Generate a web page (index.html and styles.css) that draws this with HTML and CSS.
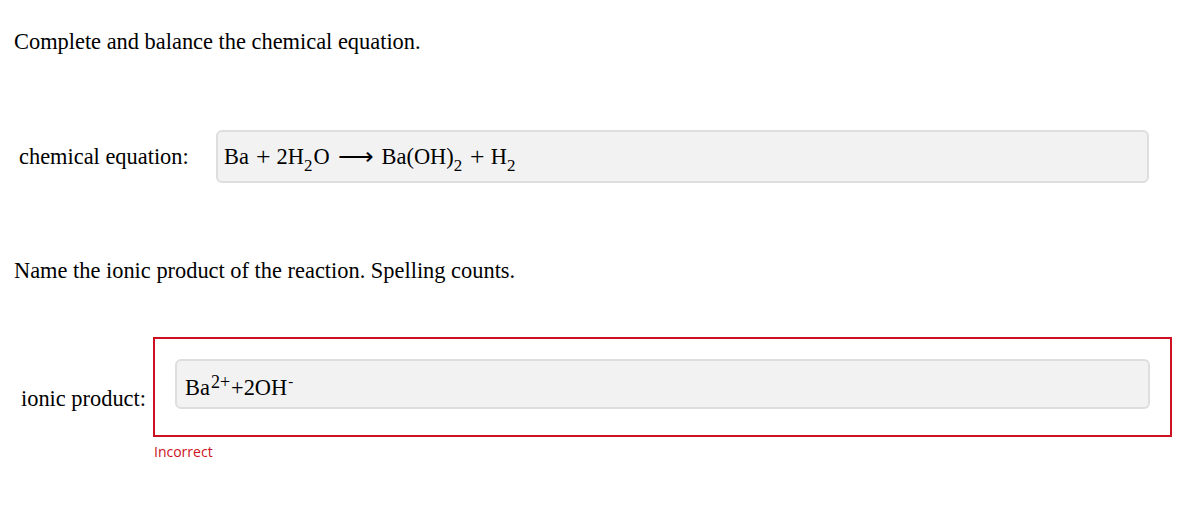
FILE: index.html
```html
<!DOCTYPE html>
<html>
<head>
<meta charset="utf-8">
<link rel="stylesheet" href="styles.css">
</head>
<body>
<div class="page">
  <p class="prompt prompt-first">Complete and balance the chemical equation.</p>
  <div class="qrow qrow-eq">
    <div class="label label-eq">chemical equation:</div>
    <div class="answer">
      <div class="field field-eq"><span class="math">Ba<span class="op">+</span>2H<sub>2</sub>O<span class="arrow">⟶</span>Ba(OH)<sub>2</sub><span class="op">+</span>H<sub>2</sub></span></div>
    </div>
  </div>
  <p class="prompt prompt-second">Name the ionic product of the reaction. Spelling counts.</p>
  <div class="qrow qrow-ion">
    <div class="label label-ion">ionic product:</div>
    <div class="answer answer-wrong">
      <div class="wrong-box">
        <div class="field field-ion"><span class="math">Ba<sup>2+</sup>+2OH<sup class="minus">-</sup></span></div>
      </div>
      <div class="feedback">Incorrect</div>
    </div>
  </div>
</div>
</body>
</html>
```
FILE: styles.css
```css
html, body {
  margin: 0;
  padding: 0;
  background: #fff;
}
body {
  font-family: "Liberation Serif", "Times New Roman", serif;
  color: #000;
  font-size: 22.4px;
}
.page {
  padding: 0 7px 0 14px;
}
.prompt {
  margin: 0;
  line-height: 26px;
}
.prompt-first {
  padding-top: 29px;
}
.qrow {
  display: flex;
  align-items: center;
}
.qrow-eq {
  margin-top: 75px;
}
.label {
  flex: none;
  white-space: nowrap;
}
.label-eq {
  width: 197px;
  padding-left: 5px;
}
.label-ion {
  width: 132px;
  padding-left: 7px;
}
.answer {
  flex: 1;
}
.field {
  background: #f2f2f2;
  border: 2px solid #dedede;
  border-radius: 6px;
  padding: 0 8px;
  display: flex;
  align-items: center;
}
.math {
  white-space: pre;
  line-height: 26px;
}
.field-eq {
  height: 49px;
  width: 915px;
  padding-left: 6px;
}
.field-eq sub {
  font-size: 17px;
  vertical-align: -7px;
  line-height: 0;
  margin: 0 1px 0 0;
}
.op {
  display: inline-block;
  margin: 0 7px 0 8px;
  transform: scale(1.15);
}
.arrow {
  display: inline-block;
  margin: 0 10px;
  transform: scaleX(1.13);
}
.prompt-second {
  margin-top: 75px;
}
.qrow-ion {
  margin-top: 53px;
}
.wrong-box {
  border: 2px solid #cc1122;
  padding: 20px 20px 26px 20px;
  width: 975px;
}
.field-ion {
  height: 38px;
  padding-top: 8px;
}
.field-ion sup {
  font-size: 18px;
  line-height: 0;
  vertical-align: 7px;
  margin: 0 1px;
}
.field-ion sup.minus {
  font-size: 15px;
  vertical-align: 9px;
}
.feedback {
  font-family: "Open Sans", "Noto Sans", sans-serif;
  font-size: 14px;
  color: #cc1122;
  margin-top: 6px;
  padding-left: 1px;
  line-height: 18px;
}
```
